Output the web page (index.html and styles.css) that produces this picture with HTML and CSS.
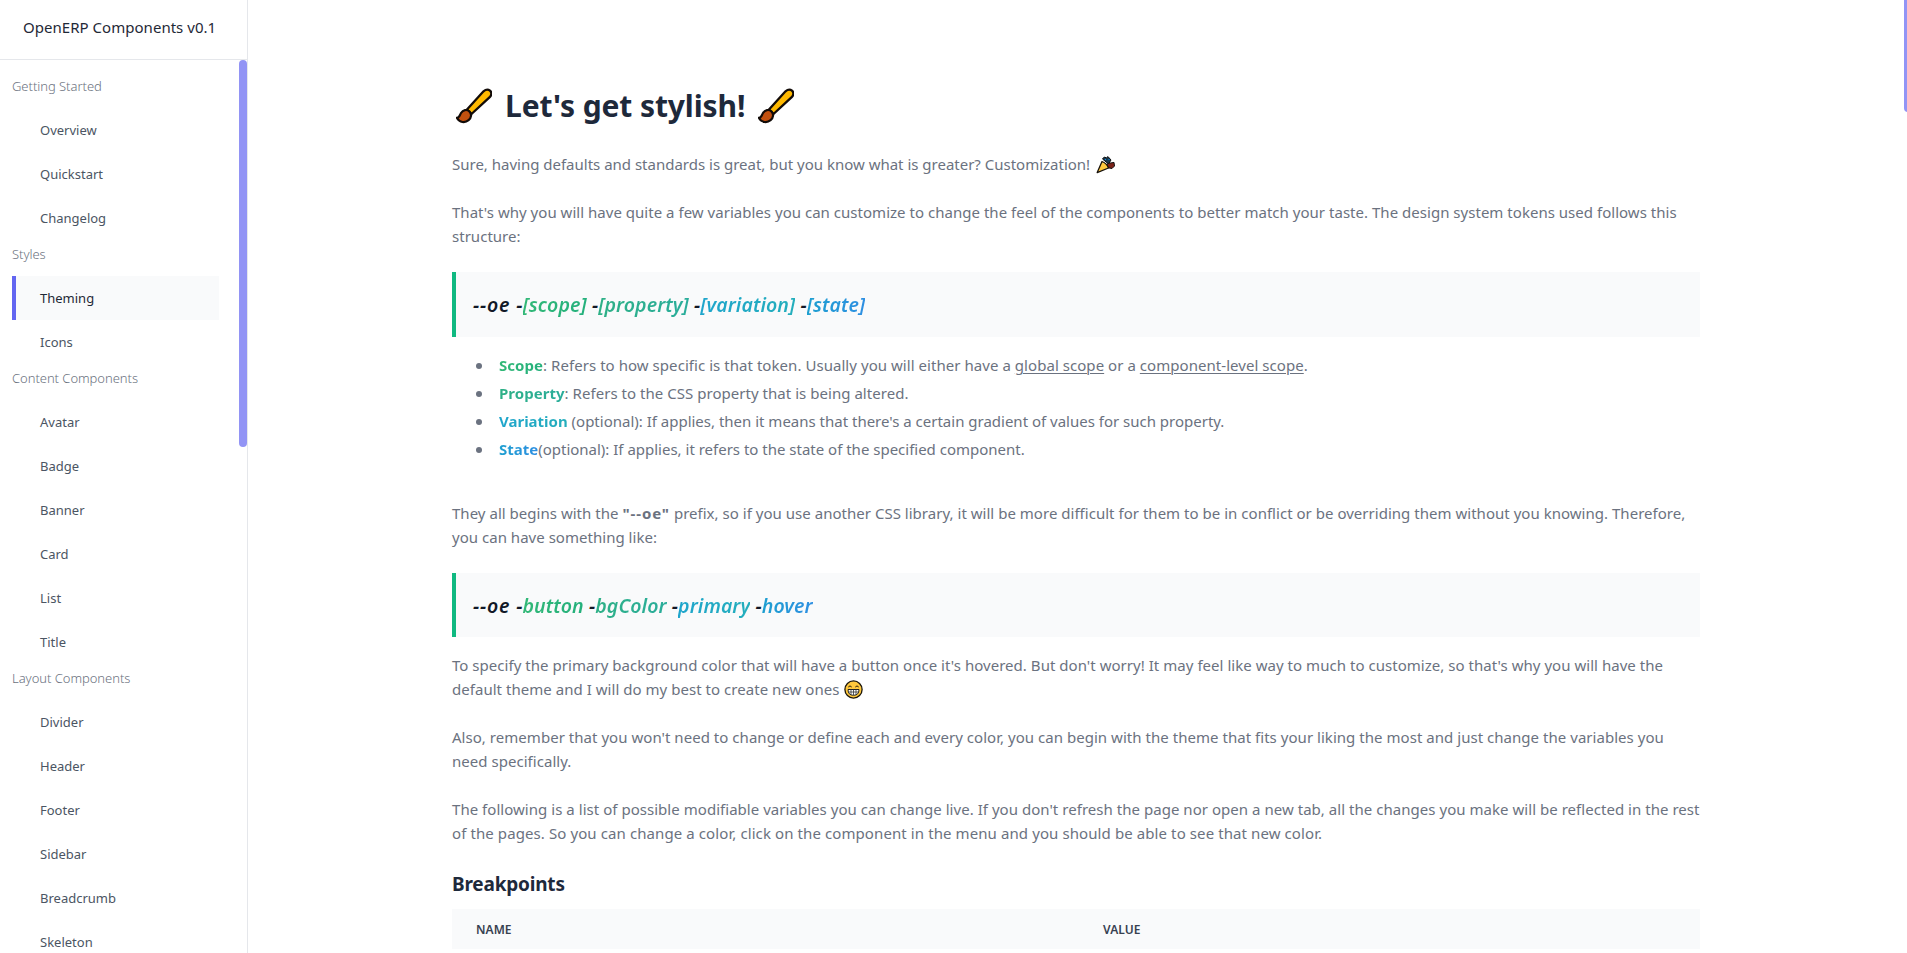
FILE: index.html
```html
<!DOCTYPE html>
<html lang="en">
<head>
<meta charset="utf-8">
<title>OpenERP Components</title>
<link rel="stylesheet" href="styles.css">
</head>
<body>
<svg width="0" height="0" class="defs">
  <symbol id="brush" viewBox="0 0 36 36">
    <path d="M11 21.500L27.500 3.300Q31 .300 34 2.600Q37 5.700 33.700 9.200L15.500 26Z" fill="#ffb900" stroke="#120b08" stroke-width="2.300"/>
    <path d="M.800 29.800C3.300 30 3.500 27.500 5 25C7 21.800 10.800 21 13.400 23.400C16 26 15.400 29.800 12.600 32.200C9 35.200 3.500 34.700.800 29.800Z" fill="#c2500f" stroke="#120b08" stroke-width="2.200" stroke-linejoin="round"/>
  </symbol>
</svg>
<div class="app">
  <aside class="sidebar">
    <div class="brand">OpenERP Components v0.1</div>
    <nav class="menu">
      <h6>Getting Started</h6>
      <a>Overview</a><a>Quickstart</a><a>Changelog</a>
      <h6>Styles</h6>
      <a class="active">Theming</a><a>Icons</a>
      <h6>Content Components</h6>
      <a>Avatar</a><a>Badge</a><a>Banner</a><a>Card</a><a>List</a><a>Title</a>
      <h6>Layout Components</h6>
      <a>Divider</a><a>Header</a><a>Footer</a><a>Sidebar</a><a>Breadcrumb</a><a>Skeleton</a>
    </nav>
    <div class="thumb"></div>
  </aside>
  <main class="content">
    <h1><svg class="brush"><use href="#brush"/></svg><span>Let's get stylish!</span><svg class="brush"><use href="#brush"/></svg></h1>
    <p class="tight">Sure, having defaults and standards is great, but you know what is greater? Customization! <svg class="party" viewBox="0 0 19 19"><path d="M6.500 4Q8 .800 10.500 2.800L12 1.600L15 5L12.500 9Z" fill="#18384f" stroke="#111"/><path d="M11.500 8.500L18 7.400L18.500 11L16 13.500L10.500 12.500Z" fill="#7c2218" stroke="#111"/><path d="M6 6.500L1.200 17.600L12.500 13Q11 8.500 6 6.500Z" fill="#ffc83d" stroke="#17110b" stroke-width="1.300" stroke-linejoin="round"/><path d="M9 4.500h1M12.500 4.500h1" stroke="#1490df"/></svg></p>
    <p class="snug">That's why you will have quite a few variables you can customize to change the feel of the components to better match your taste. The design system tokens used follows this<br>structure:</p>
    <blockquote><span class="prefix">--oe </span>-<span class="c1">[scope]</span> -<span class="c2">[property]</span> -<span class="c3">[variation]</span> -<span class="c4">[state]</span></blockquote>
    <ul>
      <li class="wide"><b class="c1">Scope</b>: Refers to how specific is that token. Usually you will either have a <u>global scope</u> or a <u>component-level scope</u>.</li>
      <li><b class="c2">Property</b>: Refers to the CSS property that is being altered.</li>
      <li class="tight"><b class="c3">Variation</b> (optional): If applies, then it means that there's a certain gradient of values for such property.</li>
      <li class="tight"><b class="c4">State</b>(optional): If applies, it refers to the state of the specified component.</li>
    </ul>
    <p class="snug">They all begins with the <b class="token">"--oe"</b> prefix, so if you use another CSS library, it will be more difficult for them to be in conflict or be overriding them without you knowing. Therefore,<br>you can have something like:</p>
    <blockquote class="example"><span class="prefix">--oe </span>-<span class="c1">button</span> -<span class="c2">bgColor</span> -<span class="c3">primary</span> -<span class="c4">hover</span></blockquote>
    <p>To specify the primary background color that will have a button once it's hovered. But don't worry! It may feel like way to much to customize, so that's why you will have the<br>default theme and I will do my best to create new ones <svg class="grin" viewBox="0 0 19 19"><circle cx="9.500" cy="9.500" r="8.600" fill="#ffc83d" stroke="#1b1509" stroke-width="1.300"/><path d="M4.300 7Q6 4.800 7.700 7M11.300 7Q13 4.800 14.700 7" fill="none" stroke="#2a1c08"/><path d="M4 9.500H15Q15 15.300 9.500 15.300T4 9.500Z" fill="#fff" stroke="#222"/><path d="M4.500 12H14.500M7 9.500V15M9.500 9.500V15M12 9.500V15" stroke="#333" stroke-width=".8"/></svg></p>
    <p>Also, remember that you won't need to change or define each and every color, you can begin with the theme that fits your liking the most and just change the variables you<br>need specifically.</p>
    <p>The following is a list of possible modifiable variables you can change live. If you don't refresh the page nor open a new tab, all the changes you make will be reflected in the rest<br><span class="loose">of the pages. So you can change a color, click on the component in the menu and you should be able to see that new color.</span></p>
    <h3>Breakpoints</h3>
    <div class="thead"><span>NAME</span><span>VALUE</span></div>
  </main>
  <div class="page-thumb"></div>
</div>
</body>
</html>
```
FILE: styles.css
```css
* { box-sizing: border-box; margin: 0; padding: 0; }
body {
  height: 953px;
  overflow: hidden;
  background: #fff;
  font-family: "Noto Sans", "Open Sans", sans-serif;
  font-size: 15px;
  line-height: 24px;
  letter-spacing: 0.036px;
  color: #6b7280;
}
.tight { letter-spacing: -0.005px; }
.snug { letter-spacing: 0.024px; }
.wide { letter-spacing: 0.05px; }
.loose { letter-spacing: 0.095px; }
.token { letter-spacing: 0.9px; }
.defs { position: absolute; }
.app { display: flex; height: 953px; overflow: hidden; position: relative; }

.sidebar {
  position: relative;
  width: 248px;
  flex: none;
  border-right: 1px solid #e5e7eb;
  overflow: hidden;
}
.brand {
  height: 60px;
  padding: 15px 0 0 23px;
  border-bottom: 1px solid #e5e7eb;
  color: #1f2937;
  letter-spacing: 0.03px;
}
.menu { padding: 12px 28px 0 12px; letter-spacing: 0; }
.menu h6 {
  height: 36px;
  padding-top: 2px;
  font-size: 13px;
  font-weight: 300;
  letter-spacing: -0.04px;
}
.menu a {
  display: block;
  height: 44px;
  padding-left: 24px;
  border-left: 4px solid transparent;
  font-size: 13px;
  line-height: 44px;
  color: #4b5563;
}
.menu a.active { background: #f9fafb; border-color: #6366f1; color: #1f2937; }
.thumb {
  position: absolute;
  top: 60px;
  right: 0;
  width: 8px;
  height: 387px;
  border-radius: 4px;
  background: #9294f5;
}
.page-thumb {
  position: absolute;
  top: -8px;
  right: -5px;
  width: 8px;
  height: 120px;
  border-radius: 4px;
  background: #9294f5;
}

.content { width: 1452px; flex: none; padding: 82px 0 0 204px; white-space: nowrap; }
h1 {
  display: flex;
  align-items: center;
  height: 48px;
  margin-bottom: 22px;
  padding-left: 4px;
  font-size: 30px;
  font-weight: 700;
  letter-spacing: -0.1px;
  color: #1e293b;
}
h1 span { margin: 0 13px 0 13px; }
.brush { width: 36px; height: 36px; flex: none; }
p { margin-bottom: 24px; }
.party, .grin { width: 19px; height: 19px; vertical-align: -4px; margin-left: 2px; }
.grin { margin-left: 1px; }

blockquote {
  height: 65px;
  margin-bottom: 16px;
  padding-left: 17px;
  border-left: 4px solid #10b981;
  background: #f9fafb;
  font-size: 19.5px;
  font-style: italic;
  font-weight: 600;
  line-height: 66px;
  letter-spacing: 0.08px;
  color: #111827;
}
.prefix { letter-spacing: 0.8px; }
.example { height: 64px; line-height: 66px; }
.c1, .c2, .c3, .c4 { -webkit-background-clip: text; background-clip: text; color: transparent; }
.c1 { background-image: linear-gradient(90deg, #32b877, #24b07c); }
.c2 { background-image: linear-gradient(90deg, #2eb086, #2aad9b); }
.c3 { background-image: linear-gradient(90deg, #1fa5cc, #24aebc); }
.c4 { background-image: linear-gradient(90deg, #1e9fd0, #2e8fe2); }

ul { list-style: none; margin-bottom: 36px; }
li { height: 28px; display: block; padding-left: 24px; line-height: 24px; }
li::before {
  content: "";
  display: inline-block;
  width: 6px;
  height: 6px;
  margin-right: 17px;
  border-radius: 50%;
  background: #6b7280;
  vertical-align: 2px;
}
u { text-underline-offset: 2px; text-decoration-thickness: 1px; }

h3 { height: 40px; padding-top: 1px; font-size: 19px; font-weight: 700; line-height: 28px; letter-spacing: -0.2px; color: #1e293b; }
.thead {
  display: grid;
  grid-template-columns: 627px 1fr;
  height: 40px;
  padding-left: 24px;
  background: #f9fafb;
  font-size: 12px;
  font-weight: 600;
  line-height: 42px;
  color: #374151;
}
```
